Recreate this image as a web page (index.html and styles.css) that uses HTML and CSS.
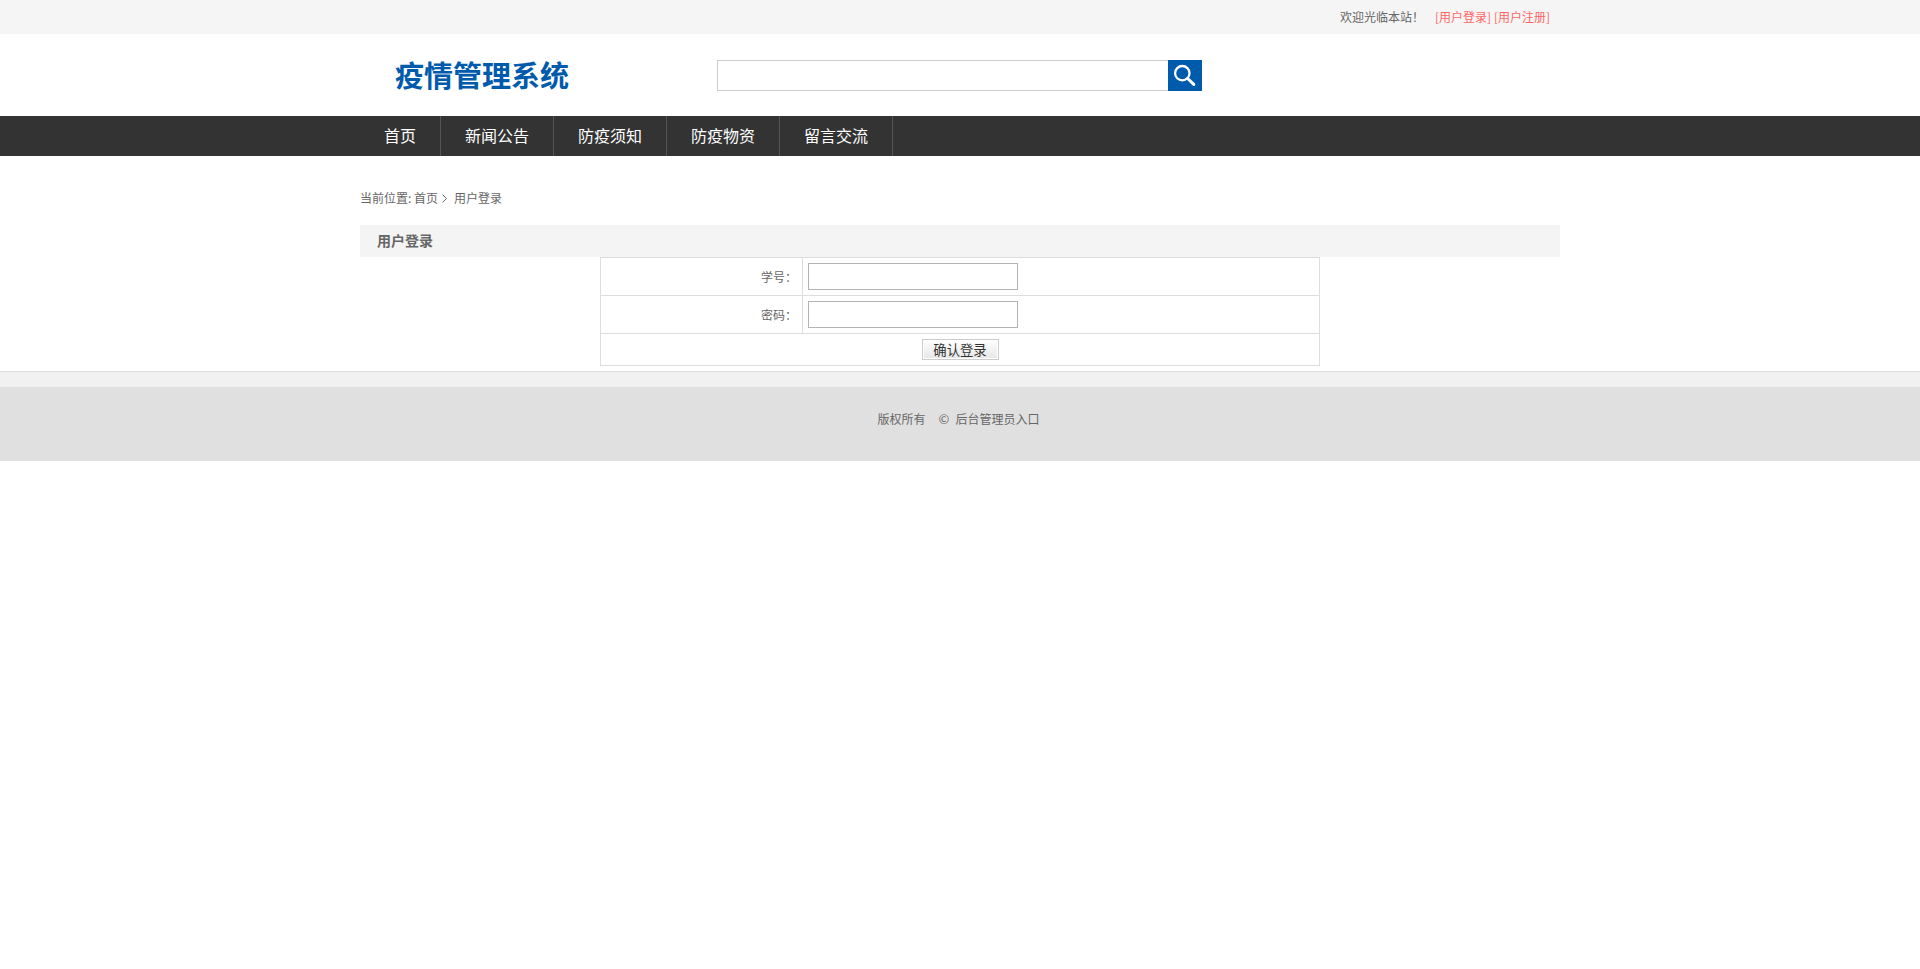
FILE: index.html
```html
<!DOCTYPE html>
<html lang="zh-CN">
<head>
<meta charset="utf-8">
<title>用户登录</title>
<link rel="stylesheet" href="styles.css">
</head>
<body>
<div class="topbar">
  <div class="wrap topbar-inner">
    <span class="welcome">欢迎光临本站！</span>
    <a class="account" href="#">[用户登录]</a>
    <a class="account" href="#">[用户注册]</a>
  </div>
</div>
<header class="wrap header">
  <h1 class="logo">疫情管理系统</h1>
  <form class="search">
    <input class="search-input" type="text">
    <button class="search-button" type="button" aria-label="搜索">
      <svg width="34" height="31" viewBox="0 0 34 31" fill="none" stroke="#fff"><circle cx="14.3" cy="13.2" r="7.2" stroke-width="2.3"/><path d="M19.6 18.5L25.8 24.4" stroke-width="3" stroke-linecap="round"/></svg>
    </button>
  </form>
</header>
<nav class="nav">
  <div class="wrap nav-list">
    <a class="nav-item" href="#">首页</a>
    <a class="nav-item" href="#">新闻公告</a>
    <a class="nav-item" href="#">防疫须知</a>
    <a class="nav-item" href="#">防疫物资</a>
    <a class="nav-item" href="#">留言交流</a>
  </div>
</nav>
<main class="wrap main">
  <div class="crumbs">
    <span class="crumb-label">当前位置:</span>
    <a href="#">首页</a>
    <svg class="chevron" width="5" height="9" viewBox="0 0 5 9" fill="none" stroke="#666"><path d="M.5 .5L4.4 4.5L.5 8.5"/></svg>
    <span>用户登录</span>
  </div>
  <h2 class="title">用户登录</h2>
  <form class="login">
    <div class="row">
      <label class="label" for="user">学号：</label>
      <div class="cell"><input class="field" id="user" type="text"></div>
    </div>
    <div class="row">
      <label class="label" for="pass">密码：</label>
      <div class="cell"><input class="field" id="pass" type="password"></div>
    </div>
    <div class="row row-submit"><button class="submit" type="button">确认登录</button></div>
  </form>
</main>
<footer class="footer">
  <div class="strip"></div>
  <div class="copyright"><span>版权所有</span><span class="mark">©</span><a href="#">后台管理员入口</a></div>
</footer>
</body>
</html>
```
FILE: styles.css
```css
* { box-sizing: border-box; }
body {
  margin: 0;
  background: #fff;
  color: #666;
  font: 12px/24px "Noto Sans CJK SC", sans-serif;
}
a { color: inherit; text-decoration: none; }
.wrap { width: 1200px; margin: 0 auto; }
.topbar { height: 34px; background: #f5f5f5; }
.topbar-inner {
  display: flex;
  justify-content: flex-end;
  padding-right: 11px;
  line-height: 34px;
}
.welcome { width: 84px; margin-right: 11px; }
.account { width: 55px; color: #ff6666; white-space: nowrap; }
.account + .account { margin-left: 4px; }
.header { display: flex; height: 82px; }
.logo {
  width: 357px;
  margin: 0;
  padding-left: 35px;
  color: #005bac;
  font-size: 29px;
  font-weight: 700;
  line-height: 81px;
}
.search { display: flex; width: 485px; height: 31px; margin-top: 26px; }
.search-input {
  width: 451px;
  border: 1px solid #ccc;
  border-right: 0;
  outline: 0;
}
.search-button {
  display: block;
  width: 34px;
  height: 31px;
  padding: 0;
  border: 0;
  background: #005bac;
}
.search-button svg { display: block; }
.nav { height: 40px; background: #333; }
.nav-list { display: flex; }
.nav-item {
  height: 40px;
  padding: 0 24px;
  border-right: 1px solid #555;
  color: #fff;
  font-size: 16px;
  line-height: 38px;
}
.main { padding-top: 30px; }
.crumbs { display: flex; align-items: center; height: 24px; }
.crumb-label { width: 54px; }
.chevron { margin: 0 7px 0 4px; }
.title {
  height: 32px;
  margin: 15px 0 0;
  padding-left: 17px;
  background: #f4f4f4;
  font-size: 14px;
  font-weight: 700;
  line-height: 30px;
}
.login {
  width: 720px;
  margin: 0 auto 5px;
  border: 1px solid #ddd;
}
.row { display: flex; height: 38px; border-bottom: 1px solid #ddd; }
.label {
  width: 202px;
  padding-right: 11px;
  border-right: 1px solid #ddd;
  line-height: 38px;
  text-align: right;
  font-feature-settings: "halt";
}
.cell { padding: 5px; }
.field {
  display: block;
  width: 210px;
  height: 27px;
  border: 1px solid #b3b3b3;
  outline: 0;
}
.row-submit { justify-content: center; height: 31px; padding-top: 5px; border: 0; }
.submit {
  width: 77px;
  height: 21px;
  padding: 0 0 1px;
  border: 1px solid #ccc;
  background: linear-gradient(#fff, #e6e6e6);
  box-shadow: inset 0 0 0 1px #fff;
  color: #333;
  font: 13.33px/17px "Noto Sans CJK SC", sans-serif;
}
.footer { border-top: 1px solid #ddd; }
.strip { height: 15px; background: #f1f1f1; }
.copyright {
  display: flex;
  justify-content: center;
  height: 74px;
  padding: 20px 3px 0 0;
  background: #e0e0e0;
}
.mark { width: 10px; margin: 0 7px 0 13px; font-size: 13px; }
```
